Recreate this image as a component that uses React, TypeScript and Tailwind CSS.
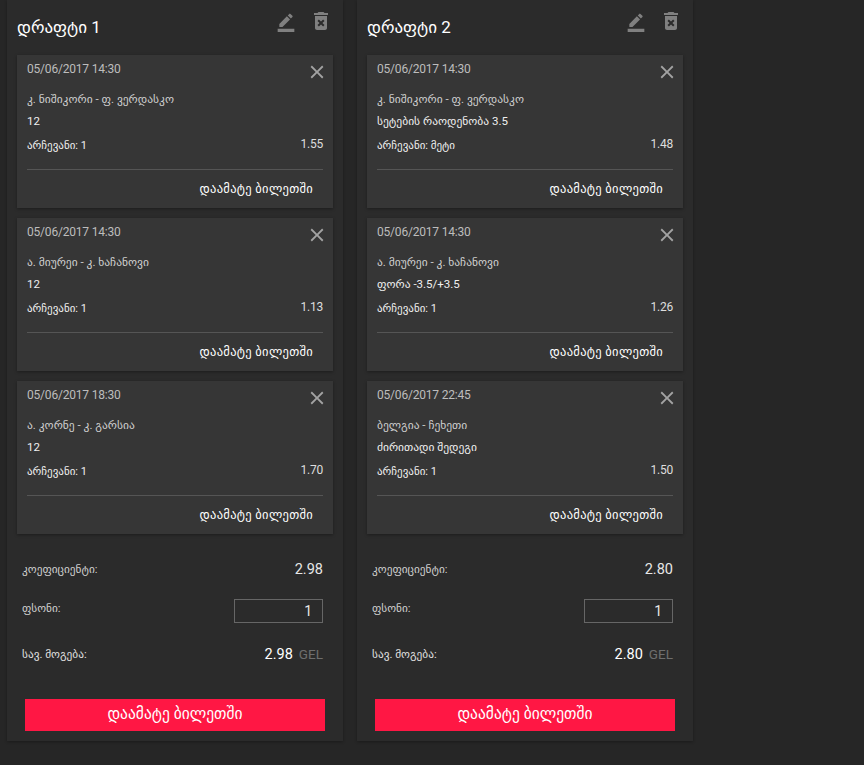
import React from 'react';
import { MdBorderColor, MdClose, MdDeleteForever } from 'react-icons/md';

interface Bet {
  date: string;
  match: string;
  market: string;
  choice: string;
  odds: string;
}

interface Draft {
  title: string;
  bets: Bet[];
  coef: string;
}

const drafts: Draft[] = [
  {
    title: 'დრაფტი 1',
    coef: '2.98',
    bets: [
      { date: '05/06/2017 14:30', match: 'კ. ნიშიკორი - ფ. ვერდასკო', market: '12', choice: 'არჩევანი: 1', odds: '1.55' },
      { date: '05/06/2017 14:30', match: 'ა. მიურეი - კ. ხაჩანოვი', market: '12', choice: 'არჩევანი: 1', odds: '1.13' },
      { date: '05/06/2017 18:30', match: 'ა. კორნე - კ. გარსია', market: '12', choice: 'არჩევანი: 1', odds: '1.70' },
    ],
  },
  {
    title: 'დრაფტი 2',
    coef: '2.80',
    bets: [
      { date: '05/06/2017 14:30', match: 'კ. ნიშიკორი - ფ. ვერდასკო', market: 'სეტების რაოდენობა 3.5', choice: 'არჩევანი: მეტი', odds: '1.48' },
      { date: '05/06/2017 14:30', match: 'ა. მიურეი - კ. ხაჩანოვი', market: 'ფორა -3.5/+3.5', choice: 'არჩევანი: 1', odds: '1.26' },
      { date: '05/06/2017 22:45', match: 'ბელგია - ჩეხეთი', market: 'ძირითადი შედეგი', choice: 'არჩევანი: 1', odds: '1.50' },
    ],
  },
];

const BetCard: React.FC<{ bet: Bet }> = ({ bet }) => (
  <div className="h-[153px] bg-[#363636] px-[10px] shadow-[0_1px_3px_rgba(0,0,0,0.35)]">
    <div className="flex h-[27px] items-start justify-between">
      <span className="mt-[6px] text-[12px] leading-[16px] tracking-[-0.2px] text-[#bdbdbd]">{bet.date}</span>
      <MdClose className="mt-[6px] mr-[-5px] text-[#a3a3a3]" size={22} />
    </div>
    <div className="mt-[9px] text-[11.5px] leading-[16px] text-[#cfcfcf]">{bet.match}</div>
    <div className="mt-[6px] text-[11.5px] leading-[16px] text-[#f0f0f0]">{bet.market}</div>
    <div className="mt-[9px] flex items-start justify-between">
      <span className="text-[11px] leading-[16px] text-[#f0f0f0]">{bet.choice}</span>
      <span className="mt-[-2px] text-[12px] leading-[16px] tracking-[-0.2px] text-[#dedede]">{bet.odds}</span>
    </div>
    <div className="mt-[15px] h-px bg-[#555555]" />
    <div className="mt-[11px] pr-[10px] text-right text-[12.5px] leading-[16px] tracking-[0.3px] text-white">დაამატე ბილეთში</div>
  </div>
);

const DraftPanel: React.FC<{ draft: Draft }> = ({ draft }) => (
  <div className="h-[741px] w-[336px] bg-[#2b2b2b] px-[10px] shadow-[0_1px_3px_rgba(0,0,0,0.3)]">
    <div className="flex h-[55px] items-start justify-between">
      <h2 className="mt-[17px] text-[17px] leading-[20px] text-white">{draft.title}</h2>
      <div className="flex items-start gap-[13px] text-[#808080]">
        <MdBorderColor className="mt-[12px]" size={20} />
        <MdDeleteForever className="mt-[9px]" size={24} />
      </div>
    </div>
    <div className="flex flex-col gap-[10px]">
      {draft.bets.map((bet, i) => (
        <BetCard key={i} bet={bet} />
      ))}
    </div>
    <div className="mt-[25px] px-[5px] pr-[10px]">
      <div className="flex h-[22px] items-center justify-between">
        <span className="text-[11.3px] text-[#d0d0d0]">კოეფიციენტი:</span>
        <span className="text-[14.5px] text-[#e6e6e6]">{draft.coef}</span>
      </div>
      <div className="mt-[18px] flex h-[24px] items-start justify-between">
        <span className="mt-[2px] text-[11.3px] leading-[16px] text-[#d0d0d0]">ფსონი:</span>
        <input
          readOnly
          value="1"
          className="h-[24px] w-[89px] border border-[#666666] bg-transparent pr-[10px] text-right text-[14px] text-[#e6e6e6] outline-none"
        />
      </div>
      <div className="mt-[21px] flex h-[22px] items-center justify-between">
        <span className="text-[11.3px] text-[#e0e0e0]">სავ. მოგება:</span>
        <span className="flex items-baseline gap-[6px]">
          <span className="text-[14.5px] text-white">{draft.coef}</span>
          <span className="text-[13.5px] text-[#6e6e6e]">GEL</span>
        </span>
      </div>
    </div>
    <button className="mx-[8px] mt-[33px] block h-[32px] w-[300px] bg-[#ff1744] text-[15.5px] text-white">დაამატე ბილეთში</button>
  </div>
);

export default function App() {
  return (
    <div className="flex h-[765px] gap-[14px] overflow-hidden bg-[#262626] pl-[7px] font-['Roboto','DejaVu_Sans',sans-serif]">
      {drafts.map((draft) => (
        <DraftPanel key={draft.title} draft={draft} />
      ))}
    </div>
  );
}
